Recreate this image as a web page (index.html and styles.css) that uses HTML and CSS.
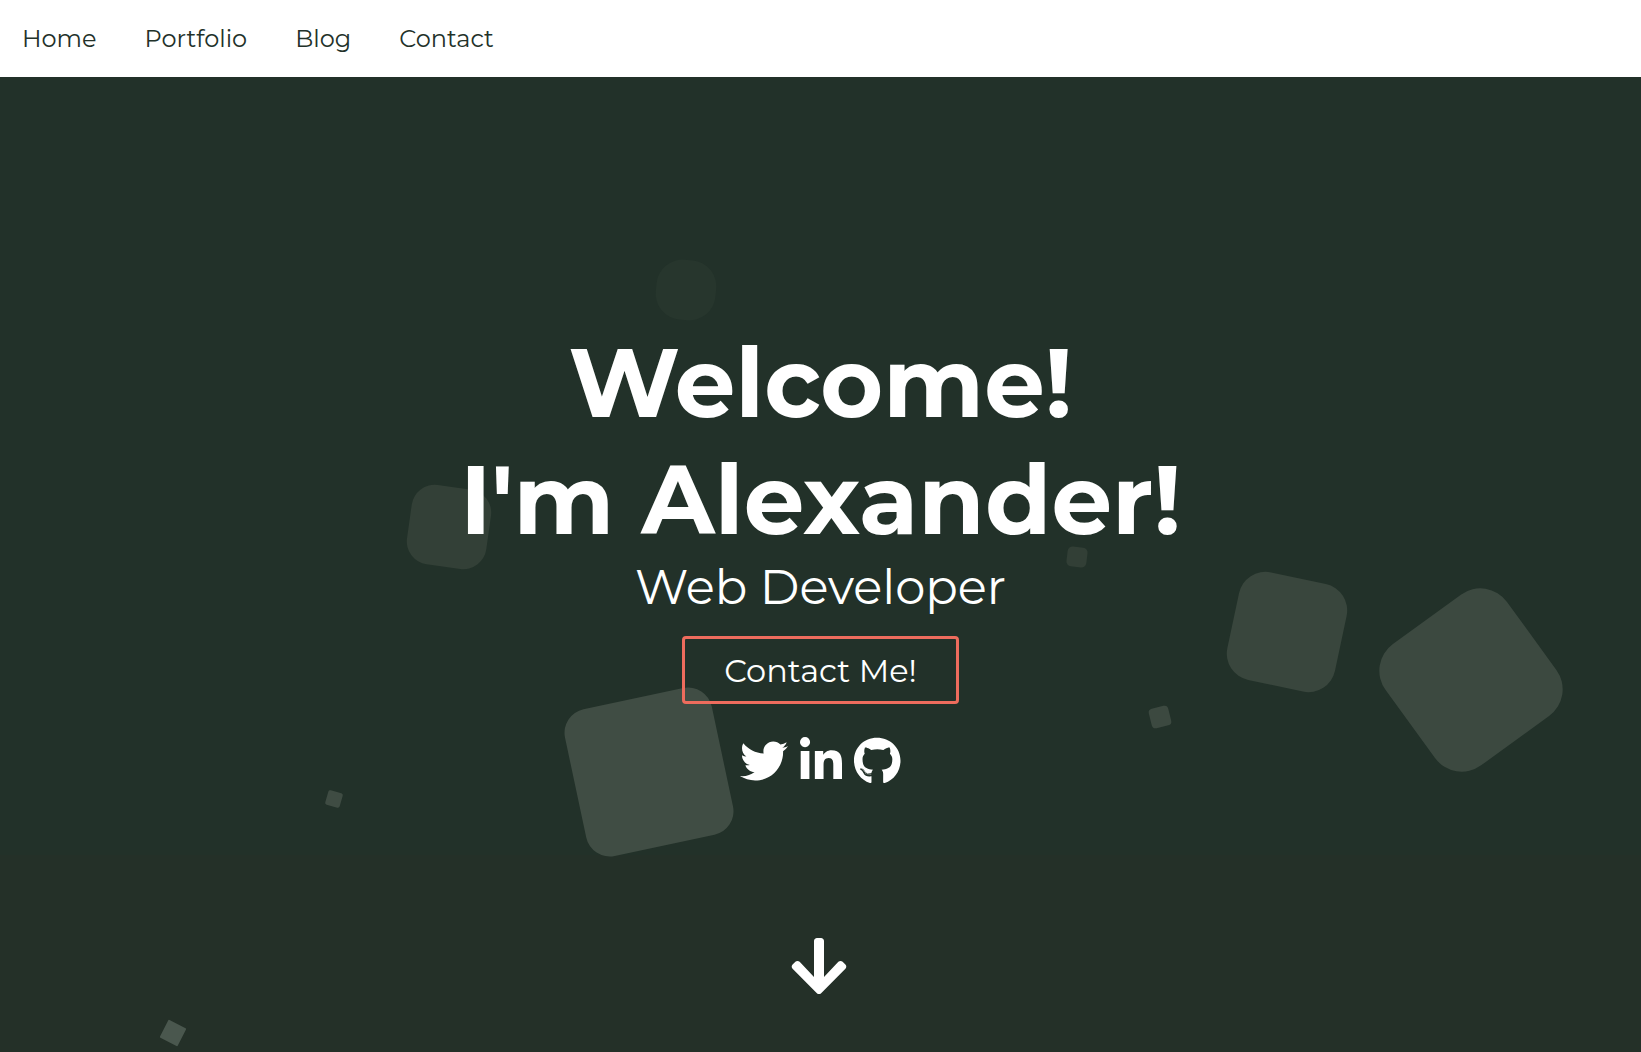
FILE: index.html
```html
<!DOCTYPE html>
<html lang="en">
<head>
<meta charset="utf-8">
<meta name="viewport" content="width=device-width, initial-scale=1">
<title>Alexander - Web Developer</title>
<link rel="stylesheet" href="styles.css">
</head>
<body>
<header class="site-header">
  <nav class="nav" aria-label="Main">
    <a class="nav-link" href="#home">Home</a>
    <a class="nav-link" href="#portfolio">Portfolio</a>
    <a class="nav-link" href="#blog">Blog</a>
    <a class="nav-link" href="#contact">Contact</a>
  </nav>
</header>
<main class="hero" id="home">
  <div class="squares" aria-hidden="true">
    <span class="square square-1"></span>
    <span class="square square-2"></span>
    <span class="square square-3"></span>
    <span class="square square-4"></span>
    <span class="square square-5"></span>
    <span class="square square-6"></span>
    <span class="square square-7"></span>
    <span class="square square-8"></span>
    <span class="square square-9"></span>
  </div>
  <h1 class="title">Welcome!<br>I'm Alexander!</h1>
  <h2 class="subtitle">Web Developer</h2>
  <button class="cta" type="button">Contact Me!</button>
  <div class="social">
    <a class="social-link" href="#twitter" aria-label="Twitter"><svg class="icon" viewBox="0 0 512 512"><path d="M459.37 151.716c.325 4.548.325 9.097.325 13.645 0 138.72-105.583 298.558-298.558 298.558-59.452 0-114.68-17.219-161.137-47.106 8.447.974 16.568 1.299 25.34 1.299 49.055 0 94.213-16.568 130.274-44.832-46.132-.975-84.792-31.188-98.112-72.772 6.498.974 12.995 1.624 19.818 1.624 9.421 0 18.843-1.3 27.614-3.573-48.081-9.747-84.143-51.98-84.143-102.985v-1.299c13.969 7.797 30.214 12.67 47.431 13.319-28.264-18.843-46.781-51.005-46.781-87.391 0-19.492 5.197-37.36 14.294-52.954 51.655 63.675 129.3 105.258 216.365 109.807-1.624-7.797-2.599-15.918-2.599-24.04 0-57.828 46.782-104.934 104.934-104.934 30.213 0 57.502 12.67 76.67 33.137 23.715-4.548 46.456-13.32 66.599-25.34-7.798 24.366-24.366 44.833-46.132 57.827 21.117-2.273 41.584-8.122 60.426-16.243-14.292 20.791-32.161 39.308-52.628 54.253z"/></svg></a>
    <a class="social-link" href="#linkedin" aria-label="LinkedIn"><svg class="icon" viewBox="0 0 448 512"><path d="M100.28 448H7.4V148.9h92.88zM53.79 108.1C24.09 108.1 0 83.5 0 53.8a53.79 53.79 0 0 1 107.58 0c0 29.7-24.1 54.3-53.79 54.3zM447.9 448h-92.68V302.4c0-34.7-.7-79.2-48.29-79.2-48.29 0-55.69 37.7-55.69 76.7V448h-92.78V148.9h89.08v40.8h1.3c12.4-23.5 42.69-48.3 87.88-48.3 94 0 111.28 61.9 111.28 142.3V448z"/></svg></a>
    <a class="social-link" href="#github" aria-label="GitHub"><svg class="icon" viewBox="0 0 496 512"><path d="M165.9 397.4c0 2-2.3 3.6-5.2 3.6-3.3.3-5.6-1.3-5.6-3.6 0-2 2.3-3.6 5.2-3.6 3-.3 5.6 1.3 5.6 3.6zm-31.1-4.5c-.7 2 1.3 4.3 4.3 4.9 2.6 1 5.6 0 6.2-2s-1.3-4.3-4.3-5.2c-2.6-.7-5.5.3-6.2 2.3zm44.2-1.7c-2.9.7-4.9 2.6-4.6 4.9.3 2 2.9 3.3 5.9 2.6 2.9-.7 4.9-2.6 4.6-4.6-.3-1.9-3-3.2-5.9-2.9zM244.8 8C106.1 8 0 113.3 0 252c0 110.9 69.8 205.8 169.5 239.2 12.8 2.3 17.3-5.6 17.3-12.1 0-6.2-.3-40.4-.3-61.4 0 0-70 15-84.7-29.8 0 0-11.4-29.1-27.8-36.6 0 0-22.9-15.7 1.6-15.4 0 0 24.9 2 38.6 25.8 21.9 38.6 58.6 27.5 72.9 20.9 2.3-16 8.8-27.1 16-33.7-55.9-6.2-112.3-14.3-112.3-110.5 0-27.5 7.6-41.3 23.6-58.9-2.6-6.5-11.1-33.3 2.6-67.9 20.9-6.5 69 27 69 27 20-5.6 41.5-8.5 62.8-8.5s42.8 2.9 62.8 8.5c0 0 48.1-33.6 69-27 13.7 34.7 5.2 61.4 2.6 67.9 16 17.7 25.8 31.5 25.8 58.9 0 96.5-58.9 104.2-114.8 110.5 9.2 7.9 17 22.9 17 46.4 0 33.7-.3 75.4-.3 83.6 0 6.5 4.6 14.4 17.3 12.1C428.2 457.8 496 362.9 496 252 496 113.3 383.5 8 244.8 8zM97.2 352.9c-1.3 1-1 3.3.7 5.2 1.6 1.6 3.9 2.3 5.2 1 1.3-1 1-3.3-.7-5.2-1.6-1.6-3.9-2.3-5.2-1zm-10.8-8.1c-.7 1.3.3 2.9 2.3 3.9 1.6 1 3.6.7 4.3-.7.7-1.3-.3-2.9-2.3-3.9-2-.6-3.6-.3-4.3.7zm32.4 35.6c-1.6 1.3-1 4.3 1.3 6.2 2.3 2.3 5.2 2.6 6.5 1 1.3-1.3.7-4.3-1.3-6.2-2.2-2.3-5.2-2.6-6.5-1zm-11.4-14.7c-1.6 1-1.6 3.6 0 5.9 1.6 2.3 4.3 3.3 5.6 2.3 1.6-1.3 1.6-3.9 0-6.2-1.4-2.3-4-3.3-5.6-2z"/></svg></a>
  </div>
  <a class="scroll-down" href="#portfolio" aria-label="Scroll to portfolio"><svg class="icon icon-large" viewBox="0 0 448 512"><path d="M413.1 222.5l22.2 22.2c9.4 9.4 9.4 24.6 0 33.9L241 473c-9.4 9.4-24.6 9.4-33.9 0L12.7 278.6c-9.4-9.4-9.4-24.6 0-33.9l22.2-22.2c9.5-9.5 25-9.3 34.3.4L184 343.4V56c0-13.3 10.7-24 24-24h32c13.3 0 24 10.7 24 24v287.4l114.8-120.5c9.3-9.8 24.8-10 34.3-.4z"/></svg></a>
</main>
</body>
</html>
```
FILE: styles.css
```css
* {
  box-sizing: border-box;
}

body {
  margin: 0;
  min-height: 100vh;
  display: flex;
  flex-direction: column;
  font-family: Montserrat, Inter, sans-serif;
  color: #fff;
  background: #243028;
}

.site-header {
  background: #fff;
}

.nav {
  display: flex;
  gap: 48px;
  padding: 24px 22px;
}

.nav-link {
  font-size: 24px;
  line-height: 29px;
  color: #223129;
  text-decoration: none;
}

.hero {
  position: relative;
  flex: 1;
  display: flex;
  flex-direction: column;
  align-items: center;
  padding: 247px 16px 48px;
  overflow: hidden;
  background: linear-gradient(#223129 778px, #243028 778px);
}

.title,
.subtitle,
.cta,
.social,
.scroll-down {
  z-index: 1;
}

.title {
  margin: 0;
  font-size: 96px;
  font-weight: 700;
  line-height: 117px;
  text-align: center;
}

.subtitle {
  margin: 0;
  font-size: 48px;
  font-weight: 400;
  line-height: 59px;
}

.cta {
  margin-top: 19px;
  height: 68px;
  padding: 0 39px;
  border: 3px solid #ee6c5d;
  border-radius: 4px;
  background: transparent;
  color: #fff;
  font-family: inherit;
  font-size: 32px;
}

.social {
  display: flex;
  gap: 12px;
  margin-top: 33px;
}

.social-link,
.scroll-down {
  display: flex;
  color: #fff;
}

.scroll-down {
  margin-top: 149px;
  padding-right: 4px;
}

.icon {
  height: 48px;
  fill: currentColor;
}

.icon-large {
  height: 64px;
}

/* Floating squares: placed by their centre, measured from the middle of the hero */
.square {
  position: absolute;
  left: calc(50% + var(--x));
  top: var(--y);
  width: var(--size);
  height: var(--size);
  border-radius: var(--round);
  background: var(--tint);
  transform: translate(-50%, -50%) rotate(var(--turn));
}

.square-1 { --x: -135px; --y: 213px; --size: 60px; --round: 26px; --turn: 6deg; --tint: #27362d; }
.square-2 { --x: -372px; --y: 450px; --size: 80px; --round: 23px; --turn: 8deg; --tint: #334037; }
.square-3 { --x: 256px; --y: 480px; --size: 20px; --round: 5px; --turn: 7deg; --tint: #323f36; }
.square-4 { --x: 466px; --y: 555px; --size: 110px; --round: 27px; --turn: 12deg; --tint: #39463d; }
.square-5 { --x: 650px; --y: 603px; --size: 150px; --round: 33px; --turn: -36deg; --tint: #3c4940; }
.square-6 { --x: 339px; --y: 640px; --size: 20px; --round: 4px; --turn: -14deg; --tint: #3c4940; }
.square-7 { --x: -172px; --y: 695px; --size: 150px; --round: 24px; --turn: -12deg; --tint: #404d44; }
.square-8 { --x: -487px; --y: 722px; --size: 15px; --round: 2px; --turn: 16deg; --tint: #3f4c43; }
.square-9 { --x: -648px; --y: 956px; --size: 20px; --round: 1px; --turn: 27deg; --tint: #4a574e; }
```
